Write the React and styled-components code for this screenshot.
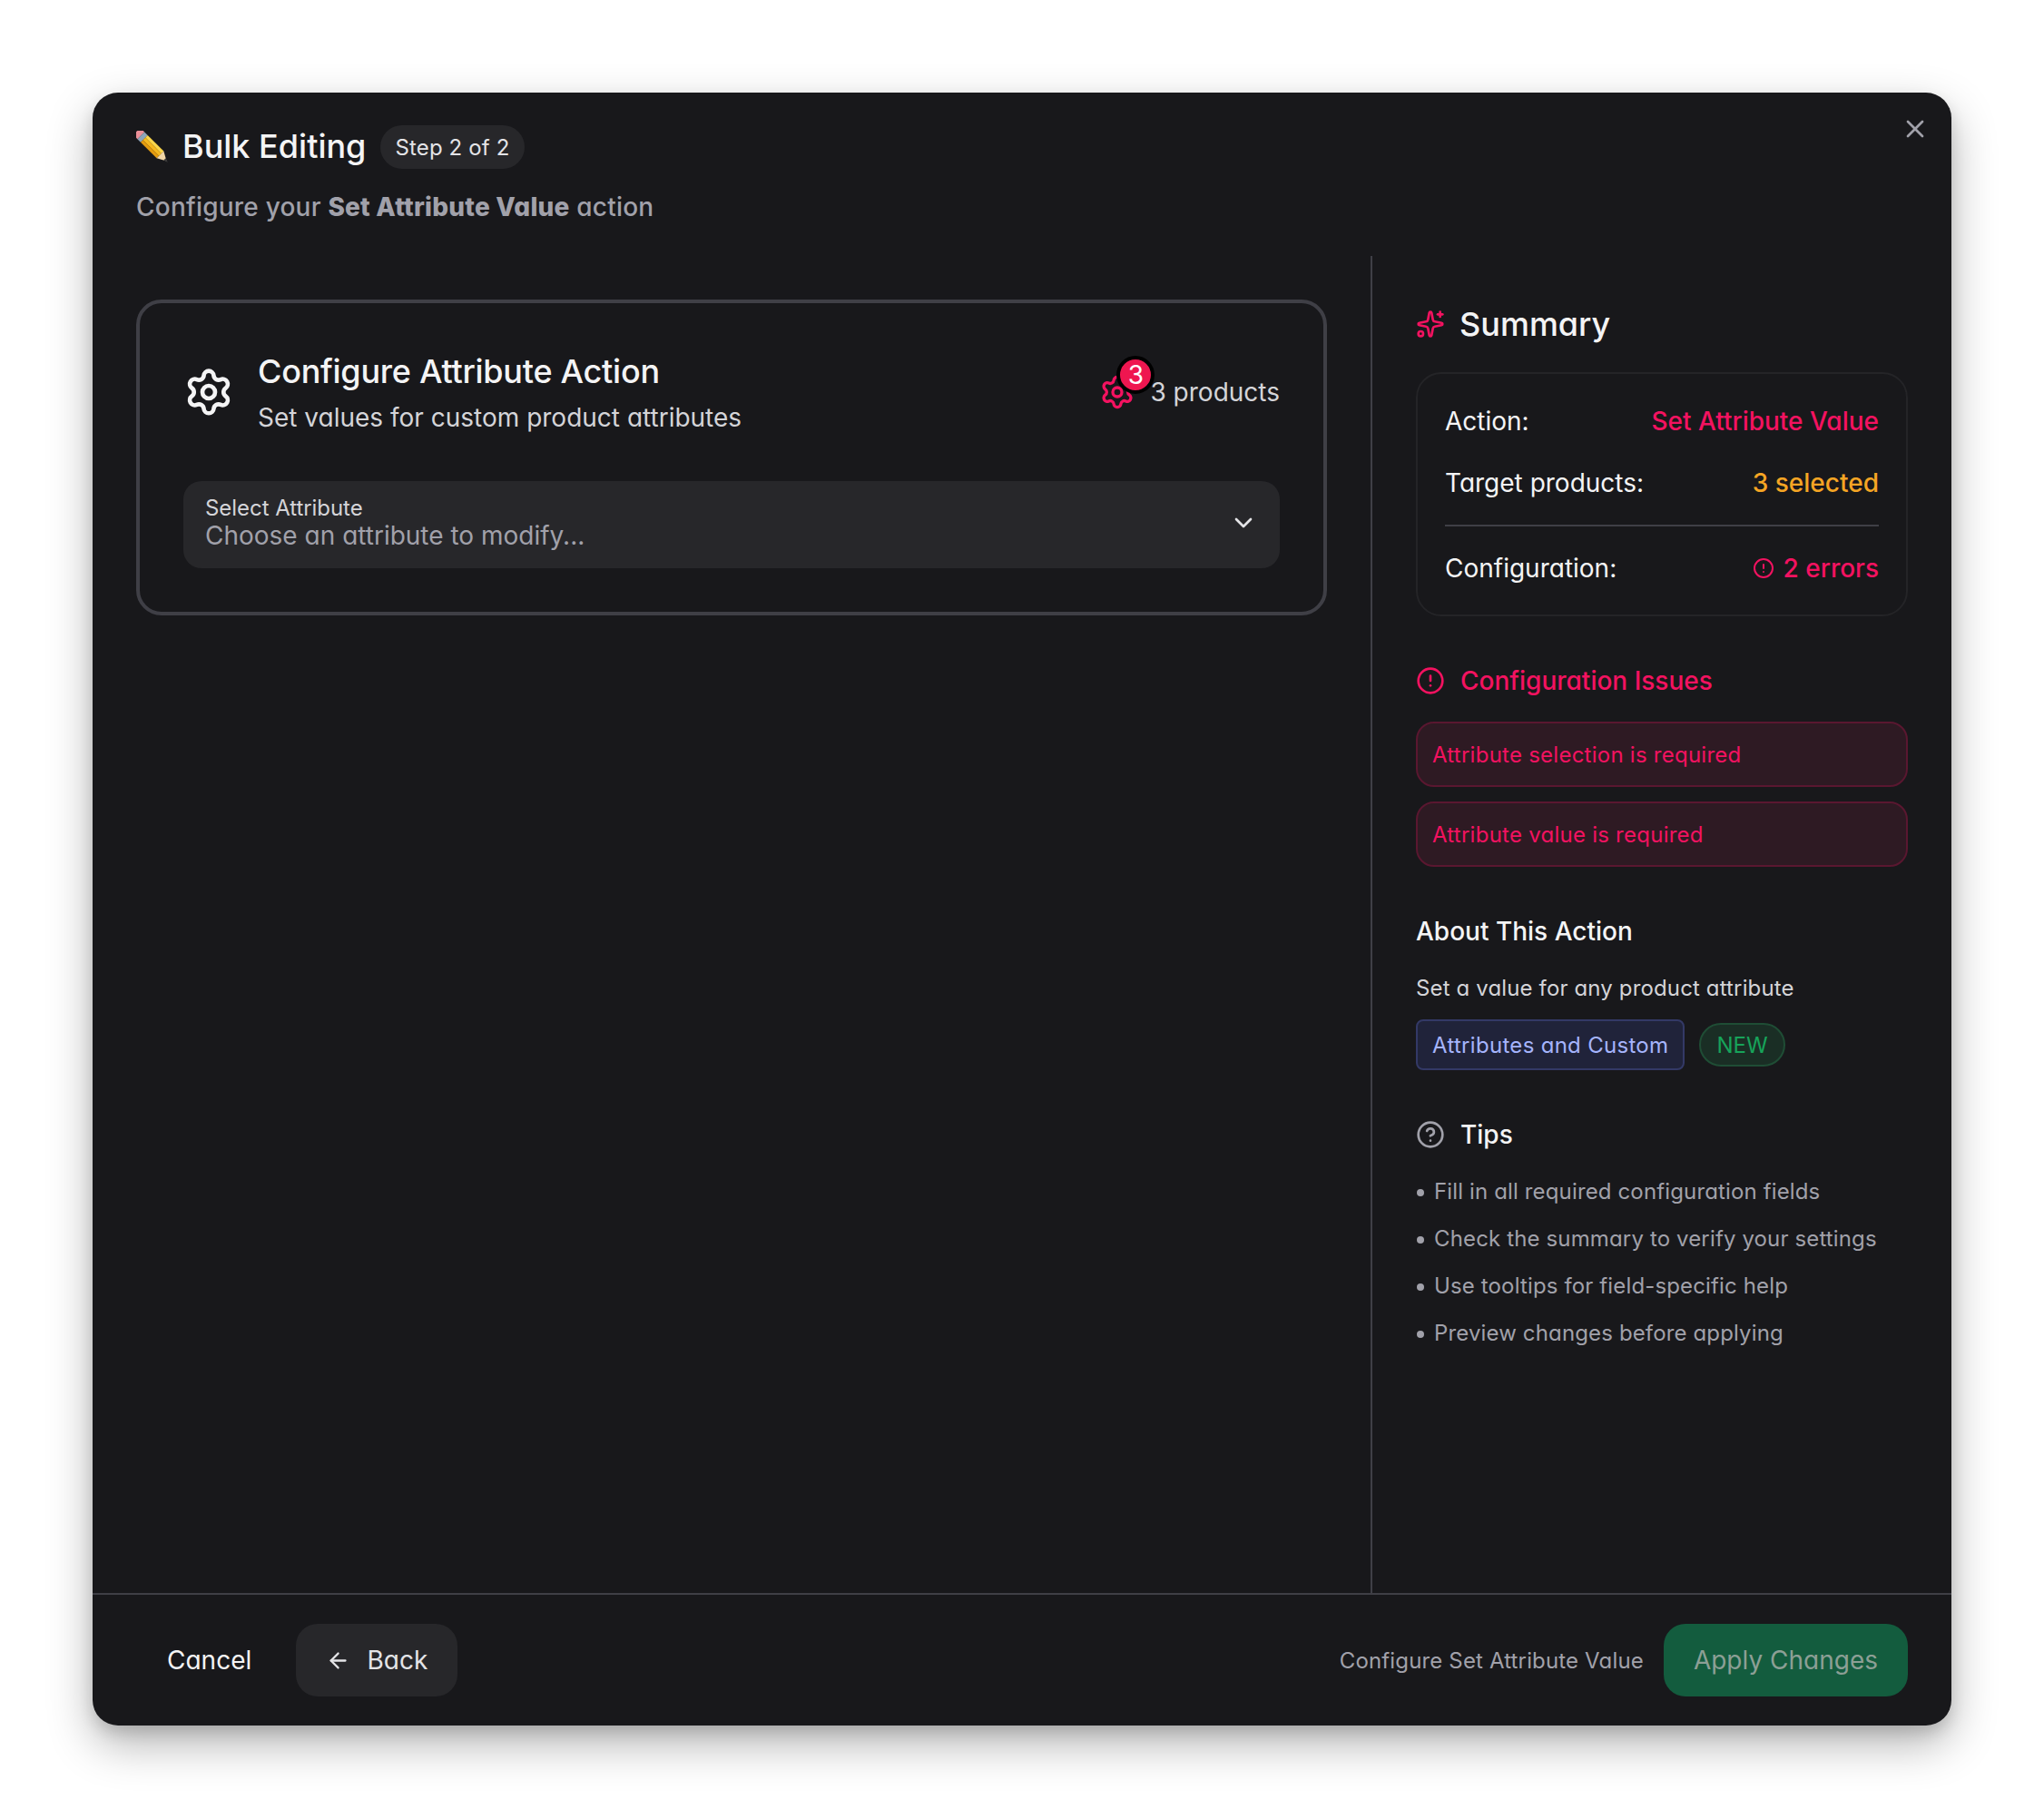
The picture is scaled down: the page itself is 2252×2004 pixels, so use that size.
import React from 'react';
import styled, { createGlobalStyle } from 'styled-components';
import {
  Settings,
  Sparkles,
  CircleAlert,
  CircleHelp,
  ChevronDown,
  ArrowLeft,
  X
} from 'lucide-react';

const danger = '#f31260';

const tips = [
  'Fill in all required configuration fields',
  'Check the summary to verify your settings',
  'Use tooltips for field-specific help',
  'Preview changes before applying'
];

const PencilEmoji = () => (
  <svg width="36" height="36" viewBox="0 0 36 36">
    <g transform="rotate(45 18 18)">
      <path d="M-4 12.5 h4 v11 h-4 a2.5 2.5 0 0 1 -2.5 -2.5 v-6 a2.5 2.5 0 0 1 2.5 -2.5z" fill="#ea8f98" />
      <rect x="0" y="12.5" width="5" height="11" fill="#8da4b8" />
      <rect x="5" y="12.5" width="25" height="3.6" fill="#fbd54a" />
      <rect x="5" y="16.1" width="25" height="3.8" fill="#f6b81e" />
      <rect x="5" y="19.9" width="25" height="3.6" fill="#e39b10" />
      <path d="M30 12.5 L40 18 L30 23.5z" fill="#f2d6a6" />
      <path d="M37 16.4 L42 18 L37 19.6z" fill="#3a3a3a" />
    </g>
  </svg>
);

const App = () => (
  <Page>
    <GlobalStyle />
    <Modal>
      <CloseButton>
        <X size={32} strokeWidth={2} />
      </CloseButton>
      <Header>
        <TitleRow>
          <PencilEmoji />
          <Title>Bulk Editing</Title>
          <StepChip>Step 2 of 2</StepChip>
        </TitleRow>
        <Subtitle>
          Configure your <strong>Set Attribute Value</strong> action
        </Subtitle>
      </Header>

      <Body>
        <MainPane>
          <Card>
            <CardHead>
              <CardHeadLeft>
                <Settings size={56} color="#f4f4f5" strokeWidth={2} />
                <div>
                  <CardTitle>Configure Attribute Action</CardTitle>
                  <CardText>Set values for custom product attributes</CardText>
                </div>
              </CardHeadLeft>
              <Products>
                <BadgeWrap>
                  <Settings size={40} color={danger} strokeWidth={2} />
                  <Badge>3</Badge>
                </BadgeWrap>
                3 products
              </Products>
            </CardHead>
            <SelectBox>
              <SelectText>
                <SelectLabel>Select Attribute</SelectLabel>
                <SelectValue>Choose an attribute to modify...</SelectValue>
              </SelectText>
              <ChevronDown size={32} color="#e4e4e7" strokeWidth={2} />
            </SelectBox>
          </Card>
        </MainPane>

        <SidePane>
          <SummaryTitle>
            <Sparkles size={32} color={danger} strokeWidth={2} />
            Summary
          </SummaryTitle>
          <SummaryCard>
            <SummaryRow>
              <span>Action:</span>
              <SummaryValue $color={danger}>Set Attribute Value</SummaryValue>
            </SummaryRow>
            <SummaryRow $top={22}>
              <span>Target products:</span>
              <SummaryValue $color="#f5a524">3 selected</SummaryValue>
            </SummaryRow>
            <SummaryDivider />
            <SummaryRow>
              <span>Configuration:</span>
              <SummaryValue $color={danger}>
                <CircleAlert size={24} strokeWidth={2} />2 errors
              </SummaryValue>
            </SummaryRow>
          </SummaryCard>

          <SectionTitle $color={danger} $top={49}>
            <CircleAlert size={32} strokeWidth={2} />
            Configuration Issues
          </SectionTitle>
          <ErrorBox>Attribute selection is required</ErrorBox>
          <ErrorBox>Attribute value is required</ErrorBox>

          <AboutTitle>About This Action</AboutTitle>
          <AboutText>Set a value for any product attribute</AboutText>
          <ChipRow>
            <TagChip>Attributes and Custom</TagChip>
            <NewChip>NEW</NewChip>
          </ChipRow>

          <SectionTitle $color="#f4f4f5" $top={49}>
            <CircleHelp size={32} color="#a1a1aa" strokeWidth={2} />
            Tips
          </SectionTitle>
          <TipList>
            {tips.map(tip => (
              <li key={tip}>{tip}</li>
            ))}
          </TipList>
        </SidePane>
      </Body>

      <Footer>
        <FooterGroup $gap={15}>
          <CancelButton>Cancel</CancelButton>
          <BackButton>
            <ArrowLeft size={33} strokeWidth={2} />
            Back
          </BackButton>
        </FooterGroup>
        <FooterGroup $gap={22}>
          <FooterHint>Configure Set Attribute Value</FooterHint>
          <ApplyButton>Apply Changes</ApplyButton>
        </FooterGroup>
      </Footer>
    </Modal>
  </Page>
);

export default App;

// Styled Components

const GlobalStyle = createGlobalStyle`
  html, body {
    margin: 0;
    padding: 0;
    background: #fff;
  }
  * {
    box-sizing: border-box;
  }
  body {
    font-family: 'Inter', 'Noto Sans', sans-serif;
    font-feature-settings: 'cv11' 1;
  }
  button {
    font: inherit;
    font-feature-settings: inherit;
  }
`;

const Page = styled.div`
  width: 2252px;
  height: 2004px;
  padding: 102px;
  overflow: hidden;
`;

const Modal = styled.div`
  position: relative;
  width: 2048px;
  height: 1799px;
  display: flex;
  flex-direction: column;
  background: #18181b;
  border-radius: 28px;
  box-shadow: 0 20px 50px rgba(0, 0, 0, 0.3), 0 8px 16px rgba(0, 0, 0, 0.12);
  color: #f4f4f5;
`;

const CloseButton = styled.button`
  position: absolute;
  top: 24px;
  right: 24px;
  width: 32px;
  height: 32px;
  padding: 0;
  border: none;
  background: transparent;
  color: #a1a1aa;
  display: flex;
`;

const Header = styled.header`
  height: 180px;
  padding: 32px 48px 0;
  display: flex;
  flex-direction: column;
  gap: 18px;
  flex: none;
`;

const TitleRow = styled.div`
  display: flex;
  align-items: center;
  height: 56px;
`;

const Title = styled.h2`
  margin: 0 16px 0 15px;
  padding-bottom: 2px;
  font-size: 36px;
  line-height: 54px;
  font-weight: 500;
`;

const StepChip = styled.span`
  height: 48px;
  padding: 0 16px;
  display: flex;
  align-items: center;
  border-radius: 24px;
  background: #27272a;
  color: #e4e4e7;
  font-size: 24px;
  letter-spacing: 0.15px;
`;

const Subtitle = styled.p`
  margin: 0;
  font-size: 28px;
  line-height: 40px;
  font-weight: 500;
  letter-spacing: 0.22px;
  color: #a1a1aa;

  strong {
    font-weight: 800;
  }
`;

const Body = styled.div`
  flex: 1;
  display: flex;
  min-height: 0;
`;

const MainPane = styled.div`
  flex: 1;
  padding: 48px;
`;

const Card = styled.section`
  border: 4px solid #3f3f46;
  border-radius: 28px;
  padding: 48px;
`;

const CardHead = styled.div`
  display: flex;
  align-items: center;
  justify-content: space-between;
  margin-bottom: 48px;
`;

const CardHeadLeft = styled.div`
  display: flex;
  align-items: center;
  gap: 26px;
`;

const CardTitle = styled.h3`
  margin: 0;
  padding-bottom: 2px;
  font-size: 36px;
  line-height: 54px;
  font-weight: 500;
  letter-spacing: -0.26px;
`;

const CardText = styled.p`
  margin: 0;
  font-size: 28px;
  line-height: 44px;
  color: #d4d4d8;
`;

const Products = styled.div`
  display: flex;
  align-items: center;
  gap: 16px;
  font-size: 28px;
  color: #d4d4d8;
`;

const BadgeWrap = styled.span`
  position: relative;
  display: flex;
`;

const Badge = styled.span`
  position: absolute;
  top: -20px;
  left: 19px;
  width: 42px;
  height: 42px;
  border: 4px solid #000;
  border-radius: 50%;
  background: #ef1650;
  color: #fff;
  font-size: 28px;
  display: flex;
  align-items: center;
  justify-content: center;
`;

const SelectBox = styled.div`
  height: 96px;
  padding: 0 24px;
  display: flex;
  align-items: center;
  justify-content: space-between;
  border-radius: 20px;
  background: #27272a;

  svg {
    margin-bottom: 4px;
  }
`;

const SelectText = styled.div`
  display: flex;
  flex-direction: column;
  margin-bottom: 6px;
`;

const SelectLabel = styled.span`
  font-size: 24px;
  line-height: 30px;
  letter-spacing: -0.05px;
  color: #d4d4d8;
`;

const SelectValue = styled.span`
  font-size: 28px;
  line-height: 30px;
  color: #a1a1aa;
`;

const SidePane = styled.aside`
  flex: none;
  width: 640px;
  border-left: 2px solid #3f3f46;
  padding: 48px 48px 0;
`;

const SummaryTitle = styled.h3`
  margin: 0 0 24px;
  height: 56px;
  padding-bottom: 2px;
  display: flex;
  align-items: center;
  gap: 16px;
  font-size: 36px;
  font-weight: 500;
`;

const SummaryCard = styled.div`
  height: 269px;
  padding: 29px 30px 0;
  border: 2px solid #242427;
  border-radius: 28px;
`;

const SummaryRow = styled.div`
  display: flex;
  align-items: center;
  justify-content: space-between;
  height: 46px;
  margin-top: ${props => props.$top || 0}px;
  font-size: 28px;
  color: #f4f4f5;
`;

const SummaryValue = styled.span`
  display: flex;
  align-items: center;
  gap: 10px;
  font-weight: 500;
  color: ${props => props.$color};
`;

const SummaryDivider = styled.div`
  height: 2px;
  margin: 23px 0 23px;
  background: #3f3f46;
`;

const SectionTitle = styled.h4`
  margin: ${props => props.$top}px 0 0;
  height: 44px;
  display: flex;
  align-items: center;
  gap: 17px;
  font-size: 28px;
  font-weight: 500;
  color: ${props => props.$color};
`;

const ErrorBox = styled.div`
  height: 72px;
  margin-top: 16px;
  padding: 0 16px;
  display: flex;
  align-items: center;
  border: 2px solid #5a1730;
  border-radius: 20px;
  background: #2e1a23;
  color: ${danger};
  font-size: 24px;
  letter-spacing: 0.25px;

  h4 + & {
    margin-top: 23px;
  }
`;

const AboutTitle = styled.h4`
  margin: 49px 0 0;
  font-size: 28px;
  line-height: 44px;
  font-weight: 500;
`;

const AboutText = styled.p`
  margin: 23px 0 0;
  font-size: 24px;
  line-height: 36px;
  letter-spacing: 0.14px;
  color: #d4d4d8;
`;

const ChipRow = styled.div`
  display: flex;
  align-items: center;
  gap: 16px;
  margin-top: 16px;
`;

const TagChip = styled.span`
  height: 56px;
  padding: 0 16px;
  display: flex;
  align-items: center;
  border: 2px solid #333966;
  border-radius: 8px;
  background: #20233a;
  color: #a5b4fc;
  font-size: 24px;
  letter-spacing: 0.3px;
`;

const NewChip = styled.span`
  height: 48px;
  padding: 0 17px;
  display: flex;
  align-items: center;
  border: 2px solid #1f4d35;
  border-radius: 24px;
  background: #1a2e25;
  color: #17a35a;
  font-size: 24px;
`;

const TipList = styled.ul`
  margin: 23px 0 0;
  padding: 0;
  list-style: none;
  font-size: 24px;
  line-height: 36px;
  letter-spacing: 0.14px;
  color: #a1a1aa;

  li {
    position: relative;
    padding-left: 20px;
    margin-bottom: 16px;
  }

  li::before {
    content: '';
    position: absolute;
    left: 1px;
    top: 15px;
    width: 8px;
    height: 8px;
    border-radius: 50%;
    background: #a1a1aa;
  }
`;

const Footer = styled.footer`
  flex: none;
  height: 146px;
  padding: 32px 48px;
  border-top: 2px solid #3f3f46;
  display: flex;
  align-items: center;
  justify-content: space-between;
`;

const FooterGroup = styled.div`
  display: flex;
  align-items: center;
  gap: ${props => props.$gap}px;
`;

const CancelButton = styled.button`
  height: 80px;
  padding: 0 34px;
  border: none;
  background: transparent;
  color: #f4f4f5;
  font-size: 28px;
`;

const BackButton = styled.button`
  height: 80px;
  width: 178px;
  padding: 0 33px;
  border: none;
  border-radius: 24px;
  background: #27272a;
  color: #e4e4e7;
  font-size: 28px;
  display: flex;
  align-items: center;
  gap: 18px;
`;

const FooterHint = styled.span`
  font-size: 24px;
  letter-spacing: 0.15px;
  color: #a1a1aa;
`;

const ApplyButton = styled.button`
  height: 80px;
  padding: 0 33px;
  border: none;
  border-radius: 24px;
  background: #135c3e;
  color: #8c9f95;
  font-size: 28px;
`;
